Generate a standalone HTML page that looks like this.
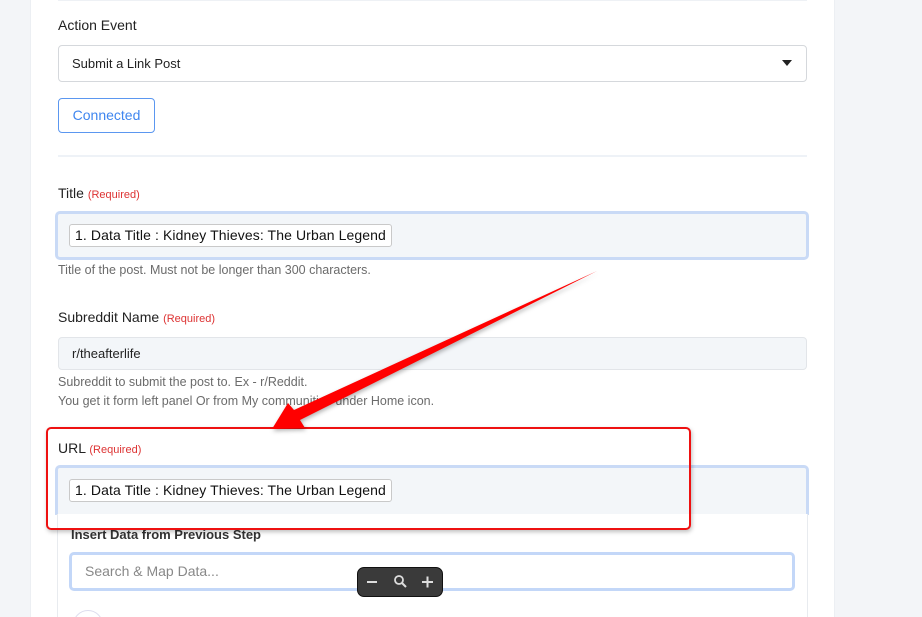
<!DOCTYPE html>
<html style="overflow:hidden;width:922px;height:617px"><head><meta charset="utf-8"><style>
*{box-sizing:border-box;margin:0;padding:0}
body{width:922px;height:617px;overflow:hidden;background:#f3f5f8;font-family:"Liberation Sans",sans-serif;position:relative}
.card{position:absolute;left:30px;top:0;width:805px;height:617px;background:#fff;border-left:1px solid #eceff3;border-right:1px solid #eceff3}
.abs{position:absolute}
.lbl{font-size:14px;color:#222}
.req{font-size:11px;color:#d33}
.help{font-size:12.5px;color:#6b6b6b;line-height:19px}
.tag{position:absolute;border:1px solid #c9c9c9;border-radius:3px;background:#fff;font-size:14px;color:#111;padding:0 5px;height:23px;line-height:21px;letter-spacing:0.1px}
</style></head><body>
<div class="card"></div>
<div class="abs" style="left:58px;top:0;width:749px;height:1px;background:#eef1f5"></div>
<div class="abs lbl" style="left:58px;top:17px">Action Event</div>
<div class="abs" style="left:58px;top:45px;width:749px;height:37px;border:1px solid #d5d8dc;border-radius:4px;background:#fff"></div>
<div class="abs" style="left:72px;top:56px;font-size:13px;color:#222">Submit a Link Post</div>
<div class="abs" style="left:782px;top:60px;width:0;height:0;border-left:5px solid transparent;border-right:5px solid transparent;border-top:6px solid #222"></div>
<div class="abs" style="left:58px;top:98px;width:97px;height:35px;border:1px solid #5b97f0;border-radius:4px;color:#3f86ef;font-size:14px;text-align:center;line-height:32px">Connected</div>
<div class="abs" style="left:58px;top:155px;width:749px;height:2px;background:#eef2f7"></div>
<div class="abs lbl" style="left:58px;top:185px">Title <span class="req">(Required)</span></div>
<div class="abs" style="left:55px;top:211px;width:754px;height:49px;border:3px solid #c9daf6;border-radius:5px;background:#f3f6f9"></div>
<div class="tag" style="left:69px;top:224px">1. Data Title : Kidney Thieves: The Urban Legend</div>
<div class="abs help" style="left:58px;top:261px">Title of the post. Must not be longer than 300 characters.</div>
<div class="abs lbl" style="left:58px;top:309px">Subreddit Name <span class="req">(Required)</span></div>
<div class="abs" style="left:58px;top:337px;width:749px;height:33px;border:1px solid #e2e5e9;border-radius:4px;background:#f3f6f9"></div>
<div class="abs" style="left:72px;top:346px;font-size:13px;color:#222">r/theafterlife</div>
<div class="abs help" style="left:58px;top:373px">Subreddit to submit the post to. Ex - r/Reddit.<br>You get it form left panel Or from My communities under Home icon.</div>
<div class="abs lbl" style="left:58px;top:440px">URL <span class="req">(Required)</span></div>
<div class="abs" style="left:55px;top:465px;width:754px;height:50px;border:3px solid #c9daf6;border-bottom:1px solid #e2e5e9;border-radius:5px 5px 0 0;background:#f3f6f9"></div>
<div class="tag" style="left:69px;top:479px">1. Data Title : Kidney Thieves: The Urban Legend</div>
<div class="abs" style="left:57px;top:514px;width:751px;height:103px;background:#fff;border-left:1px solid #e8ebef;border-right:1px solid #e8ebef;overflow:hidden">
<div class="abs" style="left:15px;top:96px;width:30px;height:30px;border:1px solid #dde;border-radius:50%"></div>
</div>
<div class="abs" style="left:71px;top:527px;font-size:13px;font-weight:bold;color:#333">Insert Data from Previous Step</div>
<div class="abs" style="left:69px;top:552px;width:726px;height:39px;border:3px solid #c3d7f8;border-radius:5px;background:#fff"></div>
<div class="abs" style="left:85px;top:563px;font-size:14px;color:#888">Search &amp; Map Data...</div>
<div class="abs" style="left:46px;top:427px;width:645px;height:103px;border:2px solid #ee1111;border-radius:5px;box-shadow:1px 2px 4px rgba(0,0,0,.25)"></div>
<svg class="abs" style="left:0;top:0" width="922" height="617">
<polygon points="272,429 288,403 294,410 597,271 300,420 305,428" fill="#f00" style="filter:drop-shadow(1px 2px 2px rgba(0,0,0,.3))"/>
</svg>
<div class="abs" style="left:357px;top:567px;width:86px;height:30px;background:#3a3a3a;border:1px solid #111;border-radius:7px"></div>
<svg class="abs" style="left:357px;top:567px" width="86" height="30">
<line x1="10" y1="15" x2="20" y2="15" stroke="#ddd" stroke-width="2"/>
<circle cx="42" cy="13" r="4" fill="none" stroke="#ddd" stroke-width="1.8"/>
<line x1="45" y1="16" x2="49" y2="20" stroke="#ddd" stroke-width="2"/>
<line x1="65" y1="15" x2="76" y2="15" stroke="#ddd" stroke-width="2"/>
<line x1="70.5" y1="9.5" x2="70.5" y2="20.5" stroke="#ddd" stroke-width="2"/>
</svg>
</body></html>
